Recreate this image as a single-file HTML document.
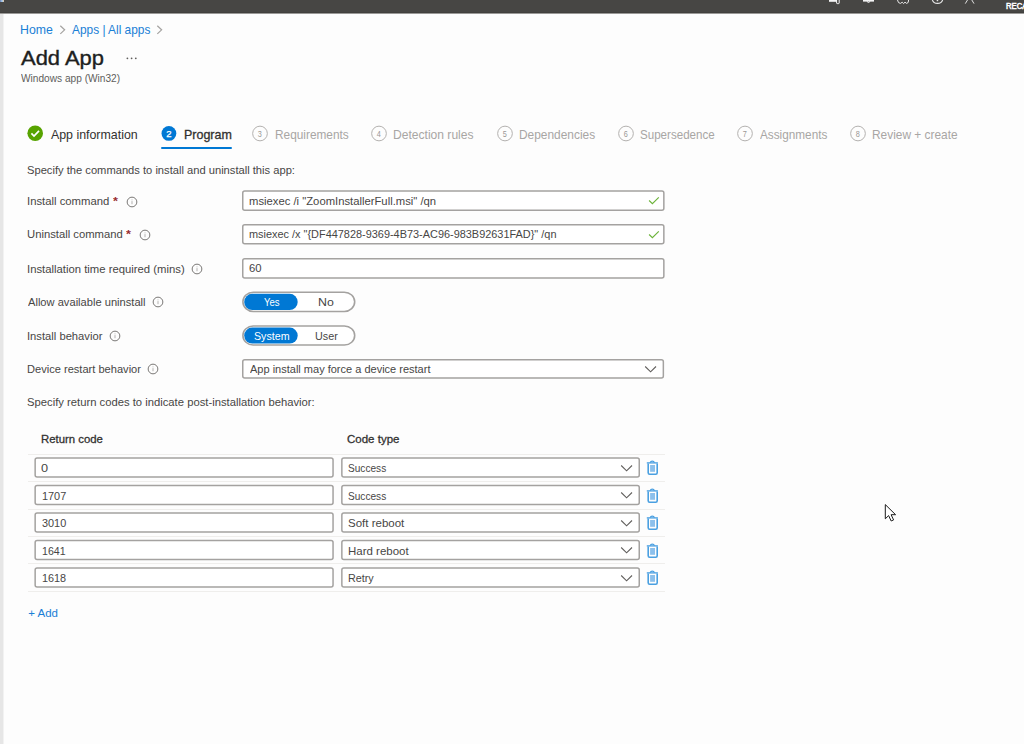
<!DOCTYPE html>
<html><head><meta charset="utf-8"><title>Add App</title>
<style>
html,body{margin:0;padding:0;}
body{width:1024px;height:744px;overflow:hidden;position:relative;background:#fdfdfd;font-family:"Liberation Sans",sans-serif;}
.t{position:absolute;white-space:nowrap;line-height:1;transform-origin:0 0;}
.r{position:absolute;}
.s{position:absolute;overflow:visible;}
</style></head><body>
<div class="r" style="left:0.00px;top:0.00px;width:1024.00px;height:12.00px;background:#474644;"></div>
<div class="r" style="left:0.00px;top:12.00px;width:1024.00px;height:1.00px;background:#41403e;"></div>
<div class="r" style="left:0.00px;top:13.00px;width:1024.00px;height:1.00px;background:#9a9997;"></div>
<div class="r" style="left:0.00px;top:14.00px;width:3.00px;height:730.00px;background:#e6e6e6;"></div>
<div class="r" style="left:3.00px;top:14.00px;width:1.00px;height:730.00px;background:#f2f2f2;"></div>
<span class="t" style="left:1005.85px;top:1.95px;font-size:8.80px;color:#ffffff;font-weight:normal;transform:scaleX(0.8759);-webkit-text-stroke:0.53px #ffffff;">RECA</span>
<svg class="s" style="left:826px;top:0px" width="150" height="8"><rect x="3" y="0" width="8" height="1.8" fill="#f4f4f4"/><rect x="10.6" y="-1" width="2.6" height="4.6" rx="0.6" fill="none" stroke="#f4f4f4" stroke-width="1"/><rect x="37" y="0" width="11" height="1.6" fill="#f4f4f4"/><path d="M40.8,1.4 Q42.5,3.6 44.2,1.4" fill="none" stroke="#f4f4f4" stroke-width="1"/><path d="M71.5,0 Q72,3.5 74.5,3.4 L76.2,2.2 L77.5,3.6 L79,2.2 L80.6,3.4 Q82.8,3.2 82.6,0" fill="none" stroke="#e8e8e8" stroke-width="1"/><path d="M106,-2 Q106.5,3.4 111.5,3.4 Q116.5,3.4 117,-2" fill="none" stroke="#e8e8e8" stroke-width="1.1"/><rect x="110.7" y="0" width="1.5" height="1.2" fill="#e8e8e8"/><path d="M139.3,3.6 L141.8,-0.5 M148,3.6 L145.5,-0.5" fill="none" stroke="#e0e0e0" stroke-width="1"/></svg>
<div class="r" style="left:0.00px;top:0.00px;width:3.50px;height:2.20px;background:linear-gradient(90deg,#6b7fb0,#9fc8f0,#e8c8a0);"></div>
<span class="t" style="left:20.27px;top:23.85px;font-size:12.40px;color:#1a7fd6;font-weight:normal;transform:scaleX(0.9922);">Home</span>
<span class="t" style="left:72.00px;top:23.85px;font-size:12.40px;color:#1a7fd6;font-weight:normal;transform:scaleX(0.9589);">Apps | All apps</span>
<svg class="s" style="left:58px;top:24px" width="10" height="12"><polyline points="2.3,1.8 6.6,5.85 2.3,9.9" fill="none" stroke="#a5a3a1" stroke-width="1.25"/></svg>
<svg class="s" style="left:155px;top:24px" width="10" height="12"><polyline points="2.3,1.8 6.6,5.85 2.3,9.9" fill="none" stroke="#a5a3a1" stroke-width="1.25"/></svg>
<span class="t" style="left:21.09px;top:47.45px;font-size:21.00px;color:#201f1e;font-weight:normal;transform:scaleX(1.0443);-webkit-text-stroke:0.38px #201f1e;">Add App</span>
<svg class="s" style="left:124px;top:55px" width="16" height="6"><circle cx="3.4" cy="3.3" r="0.9" fill="#605e5c"/><circle cx="7.6" cy="3.3" r="0.9" fill="#605e5c"/><circle cx="11.8" cy="3.3" r="0.9" fill="#605e5c"/></svg>
<span class="t" style="left:21.20px;top:73.45px;font-size:10.80px;color:#605e5c;font-weight:normal;transform:scaleX(0.9383);">Windows app (Win32)</span>
<svg class="s" style="left:26px;top:124px" width="18" height="18"><circle cx="9.2" cy="9.3" r="7.8" fill="#57a300"/><polyline points="5.4,9.4 8,12 13,6.8" fill="none" stroke="#fff" stroke-width="1.7"/></svg>
<span class="t" style="left:50.90px;top:129.05px;font-size:12.40px;color:#323130;font-weight:normal;">App information</span>
<svg class="s" style="left:160px;top:124px" width="18" height="18"><circle cx="8.9" cy="9.4" r="7.4" fill="#0078d4"/><text x="9" y="12.9" font-size="9.6" fill="#fff" stroke="#fff" stroke-width="0.25" text-anchor="middle" font-family="Liberation Sans">2</text></svg>
<span class="t" style="left:184.06px;top:129.05px;font-size:12.40px;color:#323130;font-weight:normal;transform:scaleX(1.0073);-webkit-text-stroke:0.31px #323130;">Program</span>
<div class="r" style="left:161.20px;top:147.00px;width:70.60px;height:2.00px;background:#0078d4;border-radius:1px;"></div>
<svg class="s" style="left:251.20px;top:124px" width="18" height="18"><circle cx="9" cy="9.5" r="7.35" fill="none" stroke="#b3b1af" stroke-width="1"/><text transform="translate(8.7,0) scale(0.78,1)" x="0" y="12.9" font-size="9.4" fill="#9a9896" text-anchor="middle" font-family="Liberation Sans">3</text></svg>
<span class="t" style="left:274.55px;top:129.05px;font-size:12.40px;color:#a8a6a4;font-weight:normal;transform:scaleX(0.9556);">Requirements</span>
<svg class="s" style="left:369.75px;top:124px" width="18" height="18"><circle cx="9" cy="9.5" r="7.35" fill="none" stroke="#b3b1af" stroke-width="1"/><text transform="translate(8.7,0) scale(0.78,1)" x="0" y="12.9" font-size="9.4" fill="#9a9896" text-anchor="middle" font-family="Liberation Sans">4</text></svg>
<span class="t" style="left:393.33px;top:129.05px;font-size:12.40px;color:#a8a6a4;font-weight:normal;transform:scaleX(0.9744);">Detection rules</span>
<svg class="s" style="left:495.75px;top:124px" width="18" height="18"><circle cx="9" cy="9.5" r="7.35" fill="none" stroke="#b3b1af" stroke-width="1"/><text transform="translate(8.7,0) scale(0.78,1)" x="0" y="12.9" font-size="9.4" fill="#9a9896" text-anchor="middle" font-family="Liberation Sans">5</text></svg>
<span class="t" style="left:519.05px;top:129.05px;font-size:12.40px;color:#a8a6a4;font-weight:normal;transform:scaleX(0.9606);">Dependencies</span>
<svg class="s" style="left:616.80px;top:124px" width="18" height="18"><circle cx="9" cy="9.5" r="7.35" fill="none" stroke="#b3b1af" stroke-width="1"/><text transform="translate(8.7,0) scale(0.78,1)" x="0" y="12.9" font-size="9.4" fill="#9a9896" text-anchor="middle" font-family="Liberation Sans">6</text></svg>
<span class="t" style="left:640.18px;top:129.05px;font-size:12.40px;color:#a8a6a4;font-weight:normal;transform:scaleX(0.9345);">Supersedence</span>
<svg class="s" style="left:736.40px;top:124px" width="18" height="18"><circle cx="9" cy="9.5" r="7.35" fill="none" stroke="#b3b1af" stroke-width="1"/><text transform="translate(8.7,0) scale(0.78,1)" x="0" y="12.9" font-size="9.4" fill="#9a9896" text-anchor="middle" font-family="Liberation Sans">7</text></svg>
<span class="t" style="left:760.30px;top:129.05px;font-size:12.40px;color:#a8a6a4;font-weight:normal;transform:scaleX(0.9496);">Assignments</span>
<svg class="s" style="left:849.40px;top:124px" width="18" height="18"><circle cx="9" cy="9.5" r="7.35" fill="none" stroke="#b3b1af" stroke-width="1"/><text transform="translate(8.7,0) scale(0.78,1)" x="0" y="12.9" font-size="9.4" fill="#9a9896" text-anchor="middle" font-family="Liberation Sans">8</text></svg>
<span class="t" style="left:871.85px;top:129.05px;font-size:12.40px;color:#a8a6a4;font-weight:normal;transform:scaleX(0.9604);">Review + create</span>
<span class="t" style="left:27.30px;top:164.70px;font-size:11.50px;color:#474645;font-weight:normal;transform:scaleX(0.9703);">Specify the commands to install and uninstall this app:</span>
<span class="t" style="left:26.78px;top:196.00px;font-size:11.50px;color:#474645;font-weight:normal;transform:scaleX(0.9825);">Install command</span>
<span class="t" style="left:112.74px;top:196.00px;font-size:11.50px;color:#9a2f30;font-weight:bold;transform:scaleX(1.0984);">*</span>
<svg class="s" style="left:125.50px;top:195.50px" width="12" height="12"><circle cx="6" cy="6" r="4.85" fill="none" stroke="#7a7876" stroke-width="1"/><rect x="5.6" y="5.1" width="0.8" height="3.1" fill="#a19f9d"/><rect x="5.6" y="3.5" width="0.8" height="0.8" fill="#a19f9d"/></svg>
<span class="t" style="left:26.96px;top:228.70px;font-size:11.50px;color:#474645;font-weight:normal;transform:scaleX(0.9792);">Uninstall command</span>
<span class="t" style="left:126.34px;top:228.70px;font-size:11.50px;color:#9a2f30;font-weight:bold;transform:scaleX(1.0984);">*</span>
<svg class="s" style="left:138.80px;top:229.20px" width="12" height="12"><circle cx="6" cy="6" r="4.85" fill="none" stroke="#7a7876" stroke-width="1"/><rect x="5.6" y="5.1" width="0.8" height="3.1" fill="#a19f9d"/><rect x="5.6" y="3.5" width="0.8" height="0.8" fill="#a19f9d"/></svg>
<span class="t" style="left:26.78px;top:263.70px;font-size:11.50px;color:#474645;font-weight:normal;transform:scaleX(0.9827);">Installation time required (mins)</span>
<svg class="s" style="left:191.20px;top:262.70px" width="12" height="12"><circle cx="6" cy="6" r="4.85" fill="none" stroke="#7a7876" stroke-width="1"/><rect x="5.6" y="5.1" width="0.8" height="3.1" fill="#a19f9d"/><rect x="5.6" y="3.5" width="0.8" height="0.8" fill="#a19f9d"/></svg>
<span class="t" style="left:27.80px;top:296.90px;font-size:11.50px;color:#474645;font-weight:normal;transform:scaleX(0.9677);">Allow available uninstall</span>
<svg class="s" style="left:151.90px;top:296.00px" width="12" height="12"><circle cx="6" cy="6" r="4.85" fill="none" stroke="#7a7876" stroke-width="1"/><rect x="5.6" y="5.1" width="0.8" height="3.1" fill="#a19f9d"/><rect x="5.6" y="3.5" width="0.8" height="0.8" fill="#a19f9d"/></svg>
<span class="t" style="left:26.79px;top:330.70px;font-size:11.50px;color:#474645;font-weight:normal;transform:scaleX(0.9746);">Install behavior</span>
<svg class="s" style="left:109.00px;top:329.70px" width="12" height="12"><circle cx="6" cy="6" r="4.85" fill="none" stroke="#7a7876" stroke-width="1"/><rect x="5.6" y="5.1" width="0.8" height="3.1" fill="#a19f9d"/><rect x="5.6" y="3.5" width="0.8" height="0.8" fill="#a19f9d"/></svg>
<span class="t" style="left:26.91px;top:363.90px;font-size:11.50px;color:#474645;font-weight:normal;transform:scaleX(0.9639);">Device restart behavior</span>
<svg class="s" style="left:147.30px;top:363.00px" width="12" height="12"><circle cx="6" cy="6" r="4.85" fill="none" stroke="#7a7876" stroke-width="1"/><rect x="5.6" y="5.1" width="0.8" height="3.1" fill="#a19f9d"/><rect x="5.6" y="3.5" width="0.8" height="0.8" fill="#a19f9d"/></svg>
<svg class="s" style="left:241px;top:189px" width="425" height="23"><rect x="1.75" y="1.95" width="421.10" height="19.30" rx="2.00" fill="#fff" stroke="#a4a2a0" stroke-width="1.50"/></svg>
<span class="t" style="left:249.27px;top:196.00px;font-size:11.50px;color:#474645;font-weight:normal;transform:scaleX(0.9799);">msiexec /i "ZoomInstallerFull.msi" /qn</span>
<svg class="s" style="left:646.00px;top:195.00px" width="14" height="12"><polyline points="3.1,5.5 6.4,8.7 12.8,2.3" fill="none" stroke="#6cb33a" stroke-width="1.15"/></svg>
<svg class="s" style="left:241px;top:223px" width="425" height="23"><rect x="1.75" y="1.75" width="421.10" height="19.00" rx="2.00" fill="#fff" stroke="#a4a2a0" stroke-width="1.50"/></svg>
<span class="t" style="left:249.29px;top:229.30px;font-size:11.50px;color:#474645;font-weight:normal;transform:scaleX(0.9490);">msiexec /x "{DF447828-9369-4B73-AC96-983B92631FAD}" /qn</span>
<svg class="s" style="left:646.00px;top:228.50px" width="14" height="12"><polyline points="3.1,5.5 6.4,8.7 12.8,2.3" fill="none" stroke="#6cb33a" stroke-width="1.15"/></svg>
<svg class="s" style="left:241px;top:257px" width="425" height="23"><rect x="1.75" y="1.85" width="421.10" height="19.20" rx="2.00" fill="#fff" stroke="#a4a2a0" stroke-width="1.50"/></svg>
<span class="t" style="left:249.43px;top:262.90px;font-size:11.50px;color:#474645;font-weight:normal;transform:scaleX(0.9841);">60</span>
<svg class="s" style="left:241px;top:290px" width="116" height="24"><rect x="1.90" y="2.20" width="111.80" height="19.30" rx="10.40" fill="#fff" stroke="#a4a2a0" stroke-width="1.60"/></svg>
<svg class="s" style="left:243px;top:292px" width="56" height="19"><rect x="1.20" y="1.80" width="53.50" height="16.20" rx="8.10" fill="#0078d4" stroke="none" stroke-width="0.00"/></svg>
<span class="t" style="left:263.76px;top:296.90px;font-size:11.50px;color:#ffffff;font-weight:normal;transform:scaleX(0.8308);">Yes</span>
<span class="t" style="left:318.01px;top:296.90px;font-size:11.50px;color:#474645;font-weight:normal;transform:scaleX(1.0766);">No</span>
<svg class="s" style="left:241px;top:324px" width="116" height="23"><rect x="1.90" y="2.00" width="111.80" height="19.00" rx="10.30" fill="#fff" stroke="#a4a2a0" stroke-width="1.60"/></svg>
<svg class="s" style="left:243px;top:326px" width="56" height="19"><rect x="1.20" y="1.60" width="53.50" height="16.00" rx="8.00" fill="#0078d4" stroke="none" stroke-width="0.00"/></svg>
<span class="t" style="left:253.72px;top:330.50px;font-size:11.50px;color:#ffffff;font-weight:normal;transform:scaleX(0.9275);">System</span>
<span class="t" style="left:314.59px;top:330.50px;font-size:11.50px;color:#474645;font-weight:normal;transform:scaleX(0.9384);">User</span>
<svg class="s" style="left:241px;top:358px" width="425" height="22"><rect x="1.75" y="1.85" width="420.60" height="18.20" rx="2.00" fill="#fff" stroke="#a4a2a0" stroke-width="1.50"/></svg>
<span class="t" style="left:250.30px;top:364.00px;font-size:11.50px;color:#474645;font-weight:normal;transform:scaleX(0.9571);">App install may force a device restart</span>
<svg class="s" style="left:644.00px;top:364.50px" width="14" height="10"><polyline points="1.2,1.5 6.6,6.8 12,1.5" fill="none" stroke="#605e5c" stroke-width="1.1"/></svg>
<span class="t" style="left:27.29px;top:397.30px;font-size:11.50px;color:#474645;font-weight:normal;transform:scaleX(0.9785);">Specify return codes to indicate post-installation behavior:</span>
<span class="t" style="left:40.83px;top:433.85px;font-size:11.20px;color:#323130;font-weight:normal;transform:scaleX(1.0157);-webkit-text-stroke:0.28px #323130;">Return code</span>
<span class="t" style="left:346.96px;top:433.85px;font-size:11.20px;color:#323130;font-weight:normal;transform:scaleX(1.0282);-webkit-text-stroke:0.28px #323130;">Code type</span>
<div class="r" style="left:27.50px;top:454.00px;width:637.00px;height:1.00px;background:#efeeec;"></div>
<svg class="s" style="left:33px;top:456px" width="302" height="23"><rect x="2.15" y="2.05" width="297.90" height="18.90" rx="2.00" fill="#fff" stroke="#a4a2a0" stroke-width="1.50"/></svg>
<svg class="s" style="left:340px;top:456px" width="301" height="23"><rect x="1.85" y="2.05" width="297.40" height="18.90" rx="2.00" fill="#fff" stroke="#a4a2a0" stroke-width="1.50"/></svg>
<span class="t" style="left:41.49px;top:462.35px;font-size:11.60px;color:#474645;font-weight:normal;transform:scaleX(1.0955);">0</span>
<span class="t" style="left:348.15px;top:462.35px;font-size:11.60px;color:#474645;font-weight:normal;transform:scaleX(0.8714);">Success</span>
<svg class="s" style="left:620.00px;top:463.50px" width="14" height="10"><polyline points="1.2,1.5 6.6,6.8 12,1.5" fill="none" stroke="#605e5c" stroke-width="1.1"/></svg>
<svg class="s" style="left:642.00px;top:456.00px" width="20" height="22"><path d="M4.8,6.9 H15.9" stroke="#459de0" stroke-width="1.3" fill="none"/><path d="M8.1,6.6 Q8.6,5.1 10.3,5.1 Q12,5.1 12.5,6.6" stroke="#459de0" stroke-width="1.1" fill="none"/><path d="M6.2,7.4 V16.8 Q6.2,18.2 7.6,18.2 H13.8 Q15.2,18.2 15.2,16.8 V7.4" stroke="#4aa0e1" stroke-width="1.6" fill="none"/><rect x="8.1" y="9" width="4.9" height="6.8" fill="#8cc0ec"/></svg>
<div class="r" style="left:27.50px;top:481.00px;width:637.00px;height:1.00px;background:#efeeec;"></div>
<svg class="s" style="left:33px;top:483px" width="302" height="24"><rect x="2.15" y="2.55" width="297.90" height="18.90" rx="2.00" fill="#fff" stroke="#a4a2a0" stroke-width="1.50"/></svg>
<svg class="s" style="left:340px;top:483px" width="301" height="24"><rect x="1.85" y="2.55" width="297.40" height="18.90" rx="2.00" fill="#fff" stroke="#a4a2a0" stroke-width="1.50"/></svg>
<span class="t" style="left:42.18px;top:489.75px;font-size:11.60px;color:#474645;font-weight:normal;transform:scaleX(0.9401);">1707</span>
<span class="t" style="left:348.15px;top:489.75px;font-size:11.60px;color:#474645;font-weight:normal;transform:scaleX(0.8714);">Success</span>
<svg class="s" style="left:620.00px;top:491.00px" width="14" height="10"><polyline points="1.2,1.5 6.6,6.8 12,1.5" fill="none" stroke="#605e5c" stroke-width="1.1"/></svg>
<svg class="s" style="left:642.00px;top:483.50px" width="20" height="22"><path d="M4.8,6.9 H15.9" stroke="#459de0" stroke-width="1.3" fill="none"/><path d="M8.1,6.6 Q8.6,5.1 10.3,5.1 Q12,5.1 12.5,6.6" stroke="#459de0" stroke-width="1.1" fill="none"/><path d="M6.2,7.4 V16.8 Q6.2,18.2 7.6,18.2 H13.8 Q15.2,18.2 15.2,16.8 V7.4" stroke="#4aa0e1" stroke-width="1.6" fill="none"/><rect x="8.1" y="9" width="4.9" height="6.8" fill="#8cc0ec"/></svg>
<div class="r" style="left:27.50px;top:509.00px;width:637.00px;height:1.00px;background:#efeeec;"></div>
<svg class="s" style="left:33px;top:511px" width="302" height="23"><rect x="2.15" y="2.05" width="297.90" height="18.90" rx="2.00" fill="#fff" stroke="#a4a2a0" stroke-width="1.50"/></svg>
<svg class="s" style="left:340px;top:511px" width="301" height="23"><rect x="1.85" y="2.05" width="297.40" height="18.90" rx="2.00" fill="#fff" stroke="#a4a2a0" stroke-width="1.50"/></svg>
<span class="t" style="left:42.16px;top:517.15px;font-size:11.60px;color:#474645;font-weight:normal;transform:scaleX(0.9383);">3010</span>
<span class="t" style="left:348.08px;top:517.15px;font-size:11.60px;color:#474645;font-weight:normal;transform:scaleX(0.9921);">Soft reboot</span>
<svg class="s" style="left:620.00px;top:518.50px" width="14" height="10"><polyline points="1.2,1.5 6.6,6.8 12,1.5" fill="none" stroke="#605e5c" stroke-width="1.1"/></svg>
<svg class="s" style="left:642.00px;top:511.00px" width="20" height="22"><path d="M4.8,6.9 H15.9" stroke="#459de0" stroke-width="1.3" fill="none"/><path d="M8.1,6.6 Q8.6,5.1 10.3,5.1 Q12,5.1 12.5,6.6" stroke="#459de0" stroke-width="1.1" fill="none"/><path d="M6.2,7.4 V16.8 Q6.2,18.2 7.6,18.2 H13.8 Q15.2,18.2 15.2,16.8 V7.4" stroke="#4aa0e1" stroke-width="1.6" fill="none"/><rect x="8.1" y="9" width="4.9" height="6.8" fill="#8cc0ec"/></svg>
<div class="r" style="left:27.50px;top:536.00px;width:637.00px;height:1.00px;background:#efeeec;"></div>
<svg class="s" style="left:33px;top:538px" width="302" height="24"><rect x="2.15" y="2.55" width="297.90" height="18.90" rx="2.00" fill="#fff" stroke="#a4a2a0" stroke-width="1.50"/></svg>
<svg class="s" style="left:340px;top:538px" width="301" height="24"><rect x="1.85" y="2.55" width="297.40" height="18.90" rx="2.00" fill="#fff" stroke="#a4a2a0" stroke-width="1.50"/></svg>
<span class="t" style="left:42.31px;top:544.55px;font-size:11.60px;color:#474645;font-weight:normal;transform:scaleX(0.9133);">1641</span>
<span class="t" style="left:347.68px;top:544.55px;font-size:11.60px;color:#474645;font-weight:normal;transform:scaleX(0.9907);">Hard reboot</span>
<svg class="s" style="left:620.00px;top:546.00px" width="14" height="10"><polyline points="1.2,1.5 6.6,6.8 12,1.5" fill="none" stroke="#605e5c" stroke-width="1.1"/></svg>
<svg class="s" style="left:642.00px;top:538.50px" width="20" height="22"><path d="M4.8,6.9 H15.9" stroke="#459de0" stroke-width="1.3" fill="none"/><path d="M8.1,6.6 Q8.6,5.1 10.3,5.1 Q12,5.1 12.5,6.6" stroke="#459de0" stroke-width="1.1" fill="none"/><path d="M6.2,7.4 V16.8 Q6.2,18.2 7.6,18.2 H13.8 Q15.2,18.2 15.2,16.8 V7.4" stroke="#4aa0e1" stroke-width="1.6" fill="none"/><rect x="8.1" y="9" width="4.9" height="6.8" fill="#8cc0ec"/></svg>
<div class="r" style="left:27.50px;top:563.00px;width:637.00px;height:1.00px;background:#efeeec;"></div>
<svg class="s" style="left:33px;top:566px" width="302" height="23"><rect x="2.15" y="2.05" width="297.90" height="18.90" rx="2.00" fill="#fff" stroke="#a4a2a0" stroke-width="1.50"/></svg>
<svg class="s" style="left:340px;top:566px" width="301" height="23"><rect x="1.85" y="2.05" width="297.40" height="18.90" rx="2.00" fill="#fff" stroke="#a4a2a0" stroke-width="1.50"/></svg>
<span class="t" style="left:42.29px;top:571.95px;font-size:11.60px;color:#474645;font-weight:normal;transform:scaleX(0.9356);">1618</span>
<span class="t" style="left:347.74px;top:571.95px;font-size:11.60px;color:#474645;font-weight:normal;transform:scaleX(0.9292);">Retry</span>
<svg class="s" style="left:620.00px;top:573.50px" width="14" height="10"><polyline points="1.2,1.5 6.6,6.8 12,1.5" fill="none" stroke="#605e5c" stroke-width="1.1"/></svg>
<svg class="s" style="left:642.00px;top:566.00px" width="20" height="22"><path d="M4.8,6.9 H15.9" stroke="#459de0" stroke-width="1.3" fill="none"/><path d="M8.1,6.6 Q8.6,5.1 10.3,5.1 Q12,5.1 12.5,6.6" stroke="#459de0" stroke-width="1.1" fill="none"/><path d="M6.2,7.4 V16.8 Q6.2,18.2 7.6,18.2 H13.8 Q15.2,18.2 15.2,16.8 V7.4" stroke="#4aa0e1" stroke-width="1.6" fill="none"/><rect x="8.1" y="9" width="4.9" height="6.8" fill="#8cc0ec"/></svg>
<div class="r" style="left:27.50px;top:591.00px;width:637.00px;height:1.00px;background:#efeeec;"></div>
<span class="t" style="left:28.23px;top:608.20px;font-size:11.50px;color:#1a7fd6;font-weight:normal;">+ Add</span>
<svg class="s" style="left:883px;top:503px" width="16" height="20"><path d="M2.3,1.6 L2.3,15.8 L5.6,12.6 L8.2,18 L10.6,16.9 L8.1,11.7 L12.6,11.7 Z" fill="#fff" stroke="#1a1a1a" stroke-width="1" stroke-linejoin="round"/></svg>
</body></html>
